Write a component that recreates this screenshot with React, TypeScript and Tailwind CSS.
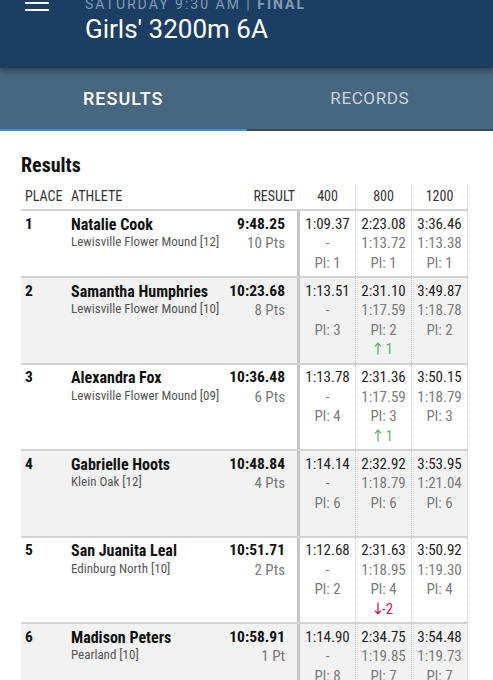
import React from "react";

type Split = { time: string; split: string; place: number; move?: number };
type Row = {
  place: number;
  name: string;
  team: string;
  mark: string;
  pts: string;
  splits: Split[];
  tall?: boolean;
};

const rows: Row[] = [
  {
    place: 1,
    name: "Natalie Cook",
    team: "Lewisville Flower Mound [12]",
    mark: "9:48.25",
    pts: "10 Pts",
    splits: [
      { time: "1:09.37", split: "-", place: 1 },
      { time: "2:23.08", split: "1:13.72", place: 1 },
      { time: "3:36.46", split: "1:13.38", place: 1 },
    ],
  },
  {
    place: 2,
    name: "Samantha Humphries",
    team: "Lewisville Flower Mound [10]",
    mark: "10:23.68",
    pts: "8 Pts",
    splits: [
      { time: "1:13.51", split: "-", place: 3 },
      { time: "2:31.10", split: "1:17.59", place: 2, move: 1 },
      { time: "3:49.87", split: "1:18.78", place: 2 },
    ],
  },
  {
    place: 3,
    name: "Alexandra Fox",
    team: "Lewisville Flower Mound [09]",
    mark: "10:36.48",
    pts: "6 Pts",
    splits: [
      { time: "1:13.78", split: "-", place: 4 },
      { time: "2:31.36", split: "1:17.59", place: 3, move: 1 },
      { time: "3:50.15", split: "1:18.79", place: 3 },
    ],
  },
  {
    place: 4,
    name: "Gabrielle Hoots",
    team: "Klein Oak [12]",
    mark: "10:48.84",
    pts: "4 Pts",
    tall: true,
    splits: [
      { time: "1:14.14", split: "-", place: 6 },
      { time: "2:32.92", split: "1:18.79", place: 6 },
      { time: "3:53.95", split: "1:21.04", place: 6 },
    ],
  },
  {
    place: 5,
    name: "San Juanita Leal",
    team: "Edinburg North [10]",
    mark: "10:51.71",
    pts: "2 Pts",
    splits: [
      { time: "1:12.68", split: "-", place: 2 },
      { time: "2:31.63", split: "1:18.95", place: 4, move: -2 },
      { time: "3:50.92", split: "1:19.30", place: 4 },
    ],
  },
  {
    place: 6,
    name: "Madison Peters",
    team: "Pearland [10]",
    mark: "10:58.91",
    pts: "1 Pt",
    splits: [
      { time: "1:14.90", split: "-", place: 8 },
      { time: "2:34.75", split: "1:19.85", place: 7, move: 1 },
      { time: "3:54.48", split: "1:19.73", place: 7 },
    ],
  },
];

const Arrow = ({ up }: { up: boolean }) => (
  <svg width="8" height="13" viewBox="0 0 8 13" className="inline-block align-[-1px]" fill="none" stroke="currentColor" strokeWidth="1.3">
    {up ? <path d="M4 12.5V1.2M1 4.4L4 1.2L7 4.4" /> : <path d="M4 0.5V11.8M1 8.6L4 11.8L7 8.6" />}
  </svg>
);

const SplitCell = ({ s }: { s: Split }) => (
  <div className="w-[56px] border-r border-dotted border-[#c4c4c4] pt-[3.5px] pb-[3px] text-center text-[15px] leading-[19.5px] whitespace-nowrap">
    <div className="text-[#1e1e1e]">{s.time}</div>
    <div className="text-[#7a7a7a]">{s.split}</div>
    <div className="text-[#7a7a7a]">Pl: {s.place}</div>
    {s.move !== undefined &&
      (s.move > 0 ? (
        <div className="text-[#5cb26a]">
          <Arrow up /> {s.move}
        </div>
      ) : (
        <div className="text-[#c0204f]">
          <Arrow up={false} />
          {s.move}
        </div>
      ))}
  </div>
);

export default function App() {
  return (
    <div className="h-[680px] w-[493px] overflow-hidden bg-white font-['Roboto',sans-serif]">
      {/* Header */}
      <div className="relative z-10 flex h-[68px] items-start bg-[#1c3e65] shadow-[0_3px_6px_rgba(0,0,0,0.35)]">
        <div className="ml-[25px] -mt-[5px] flex flex-col gap-[5px]">
          <span className="h-[2px] w-[24px] bg-white" />
          <span className="h-[2px] w-[24px] bg-white" />
          <span className="h-[2px] w-[24px] bg-white" />
        </div>
        <div className="ml-[36px] -mt-[4px] flex flex-col gap-[2px]">
          <div className="text-[14px] leading-[16px] tracking-[2px] text-[#8399b2]">
            SATURDAY 9:30 AM | <span className="font-bold">FINAL</span>
          </div>
          <div className="text-[26px] leading-[30px] text-white">Girls' 3200m 6A</div>
        </div>
      </div>

      {/* Tabs */}
      <div className="flex h-[63px] bg-[#47667f]">
        <div className="flex flex-1 items-center justify-center border-b-2 border-[#3f8de0] text-[18px] font-medium tracking-[1px] text-white">
          RESULTS
        </div>
        <div className="flex flex-1 items-center justify-center border-b-2 border-[#34495c] text-[17px] tracking-[0.6px] text-[#c9d3dd]">
          RECORDS
        </div>
      </div>

      {/* Content */}
      <div className="pl-[21px] font-['Roboto_Condensed','Liberation_Sans_Narrow',Roboto,sans-serif]">
        <h2 className="mt-[22px] text-[20px] font-bold leading-[24px] text-[#111]">Results</h2>

        <div className="mt-[7px] w-[447px]">
          <div className="flex h-[27px] items-stretch border-b-2 border-[#d2d2d2] text-[14px] uppercase text-[#333]">
            <div className="flex w-[50px] items-center pl-[4px]">Place</div>
            <div className="flex w-[156px] items-center">Athlete</div>
            <div className="flex w-[70px] items-center justify-end pr-[2px]">Result</div>
            <div className="flex border-l-[3px] border-transparent">
              {["400", "800", "1200"].map((d) => (
                <div key={d} className="flex w-[56px] items-center justify-center border-r border-dotted border-[#c4c4c4]">
                  {d}
                </div>
              ))}
            </div>
          </div>

          {rows.map((r, i) => (
            <div
              key={r.place}
              className={`flex border-b-2 border-[#d2d2d2] ${i % 2 === 1 ? "bg-[#f2f2f2]" : "bg-white"} ${r.tall ? "min-h-[86.5px]" : ""}`}
            >
              <div className="w-[50px] pl-[4px] pt-[3.5px] text-[15.5px] font-bold leading-[19.5px] text-[#111]">{r.place}</div>
              <div className="w-[156px] pt-[3.5px] whitespace-nowrap">
                <div className="text-[16px] font-bold leading-[19.5px] text-[#111]">{r.name}</div>
                <div className="text-[13px] leading-[16px] text-[#555]">{r.team}</div>
              </div>
              <div className="w-[70px] pr-3 pt-[3.5px] text-right leading-[19.5px]">
                <div className="text-[15.5px] font-bold text-[#111]">{r.mark}</div>
                <div className="text-[15px] text-[#777]">{r.pts}</div>
              </div>
              <div className="flex border-l-[3px] border-[#c6c6c6]">
                {r.splits.map((s, j) => (
                  <SplitCell key={j} s={s} />
                ))}
              </div>
            </div>
          ))}
        </div>
      </div>
    </div>
  );
}
